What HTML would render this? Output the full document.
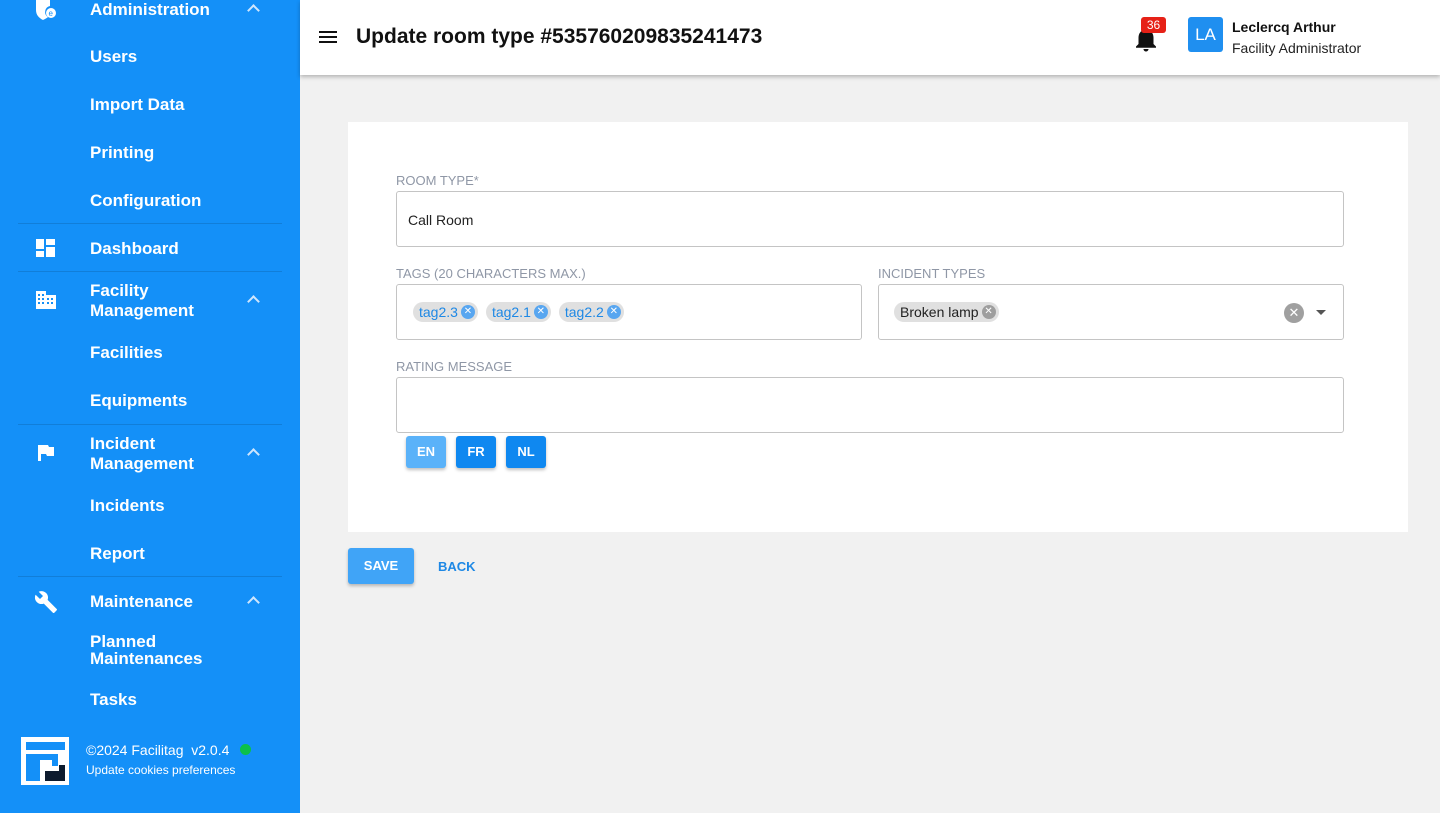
<!DOCTYPE html>
<html><head><meta charset="utf-8"><style>
*{box-sizing:border-box;margin:0;padding:0}
body{width:1440px;height:813px;overflow:hidden;background:#f1f1f1;font-family:"Liberation Sans",Arial,sans-serif;position:relative}
.side{position:absolute;left:0;top:0;width:300px;height:813px;background:#1490f8;color:#fff}
.it{position:absolute;left:90px;font-weight:bold;font-size:17px;line-height:20px}
.ic{position:absolute;left:36px}
.chev{position:absolute;left:249px;width:9px;height:9px;border-left:2px solid #cfe6fd;border-top:2px solid #cfe6fd;transform:rotate(45deg)}
.sep{position:absolute;left:18px;width:264px;height:1px;background:rgba(0,0,0,.12)}
.top{position:absolute;left:300px;top:0;width:1140px;height:75px;background:#fff;box-shadow:0 2px 4px rgba(0,0,0,.25)}
.card{position:absolute;left:348px;top:122px;width:1060px;height:410px;background:#fff}
.lbl{position:absolute;font-size:13px;color:#8f97a6;text-transform:uppercase}
.box{position:absolute;border:1px solid #c4c4c4;border-radius:3px;background:#fff}
.chip{display:inline-flex;align-items:center;height:20px;border-radius:10px;background:#e0e0e0;color:#1e88e5;font-size:14px;padding:0 3px 0 6px;margin-right:8px}
.x{display:inline-block;width:14px;height:14px;border-radius:50%;background:#58a6f0;color:#fff;font-size:10px;line-height:14px;text-align:center;margin-left:3px}
.btn{position:absolute;width:40px;height:32px;border-radius:3px;background:#0f88f0;color:#fff;font-weight:bold;font-size:13px;line-height:32px;text-align:center;box-shadow:0 2px 3px rgba(0,0,0,.25)}
</style></head><body>
<div class="side">
 <svg class="ic" style="top:0" width="20" height="20" viewBox="0 0 20 20"><path d="M0 0h14v6a6 6 0 0 0-2 11c-1 1-3 2-5 3C3 18 0 15 0 10z" fill="#fff"/><circle cx="15" cy="13" r="5" fill="#fff"/><text x="12.5" y="16" font-size="8" fill="#1490f8" font-family="Liberation Sans">e</text></svg>
 <div class="it" style="top:0px">Administration</div><div class="chev" style="top:6px"></div>
 <div class="it" style="top:47px">Users</div>
 <div class="it" style="top:95px">Import Data</div>
 <div class="it" style="top:143px">Printing</div>
 <div class="it" style="top:191px">Configuration</div>
 <div class="sep" style="top:223px"></div>
 <svg class="ic" style="top:239px" width="19" height="18" viewBox="0 0 19 18" fill="#fff"><rect x="0" y="0" width="8" height="10"/><rect x="0" y="12" width="8" height="6"/><rect x="10" y="0" width="9" height="6"/><rect x="10" y="8" width="9" height="10"/></svg>
 <div class="it" style="top:239px">Dashboard</div>
 <div class="sep" style="top:271px"></div>
 <svg class="ic" style="top:291px" width="20" height="18" viewBox="0 0 20 18" fill="#fff"><path d="M0 0h10v4h10v14H0z"/><g fill="#1490f8"><rect x="2" y="3" width="2" height="2"/><rect x="6" y="3" width="2" height="2"/><rect x="2" y="7" width="2" height="2"/><rect x="6" y="7" width="2" height="2"/><rect x="2" y="11" width="2" height="2"/><rect x="6" y="11" width="2" height="2"/><rect x="11" y="7" width="2" height="2"/><rect x="15" y="7" width="2" height="2"/><rect x="11" y="11" width="2" height="2"/><rect x="15" y="11" width="2" height="2"/></g></svg>
 <div class="it" style="top:281px">Facility<br>Management</div><div class="chev" style="top:297px"></div>
 <div class="it" style="top:343px">Facilities</div>
 <div class="it" style="top:391px">Equipments</div>
 <div class="sep" style="top:424px"></div>
 <svg class="ic" style="top:445px;left:38px" width="16" height="16" viewBox="0 0 16 16" fill="#fff"><path d="M0 0h10l1 2h5v9H9l-1-2H3v7H0z"/></svg>
 <div class="it" style="top:434px">Incident<br>Management</div><div class="chev" style="top:450px"></div>
 <div class="it" style="top:496px">Incidents</div>
 <div class="it" style="top:544px">Report</div>
 <div class="sep" style="top:576px"></div>
 <svg class="ic" style="top:590px;left:34px" width="24" height="24" viewBox="0 0 24 24" fill="#fff"><path d="M22.7 19l-9.1-9.1c.9-2.3.4-5-1.5-6.9-2-2-5-2.4-7.4-1.3L9 6 6 9 1.6 4.7C.4 7.1.9 10.1 2.9 12.1c1.9 1.9 4.6 2.4 6.9 1.5l9.1 9.1c.4.4 1 .4 1.4 0l2.3-2.3c.5-.4.5-1.1.1-1.4z"/></svg>
 <div class="it" style="top:592px">Maintenance</div><div class="chev" style="top:598px"></div>
 <div class="it" style="top:633px;line-height:17px">Planned<br>Maintenances</div>
 <div class="it" style="top:690px">Tasks</div>
 <svg style="position:absolute;left:21px;top:737px" width="48" height="48" viewBox="0 0 48 48"><rect width="48" height="48" fill="#fff"/><rect x="5" y="5" width="39" height="8" fill="#1490f8"/><rect x="5" y="17" width="30" height="6" fill="#1490f8"/><rect x="5" y="17" width="14" height="27" fill="#1490f8"/><rect x="31" y="17" width="6" height="12" fill="#1490f8"/><path d="M24 44h20V28h-6v6H24z" fill="#0d1b2e"/></svg>
 <div style="position:absolute;left:86px;top:742px;font-size:14px">©2024 Facilitag&nbsp; v2.0.4</div>
 <div style="position:absolute;left:240px;top:744px;width:11px;height:11px;border-radius:50%;background:#0cc04a"></div>
 <div style="position:absolute;left:86px;top:763px;font-size:12px">Update cookies preferences</div>
</div>
<div class="top">
 <div style="position:absolute;left:19px;top:31px;width:18px;height:2px;background:#111;box-shadow:0 5px 0 #111,0 10px 0 #111"></div>
 <div style="position:absolute;left:56px;top:25px;font-size:21px;font-weight:bold;color:#111">Update room type #535760209835241473</div>
 <svg style="position:absolute;left:831px;top:24px" width="30" height="30" viewBox="0 0 24 24"><path d="M12 22c1.1 0 2-.9 2-2h-4c0 1.1.9 2 2 2zm6-6v-5c0-3.1-1.6-5.6-4.5-6.3V4c0-.8-.7-1.5-1.5-1.5s-1.5.7-1.5 1.5v.7C7.6 5.4 6 7.9 6 11v5l-2 2v1h16v-1z" fill="#111"/></svg>
 <div style="position:absolute;left:841px;top:17px;width:25px;height:16px;border-radius:3px;background:#e62117;color:#fff;font-size:12px;text-align:center;line-height:16px">36</div>
 <div style="position:absolute;left:888px;top:17px;width:35px;height:35px;border-radius:3px;background:#1f8ff0;color:#fff;font-size:17px;text-align:center;line-height:35px">LA</div>
 <div style="position:absolute;left:932px;top:19px;font-size:14px;font-weight:bold;color:#111">Leclercq Arthur</div>
 <div style="position:absolute;left:932px;top:40px;font-size:14px;color:#222">Facility Administrator</div>
</div>
<div class="card">
 <div class="lbl" style="left:48px;top:51px">Room type*</div>
 <div class="box" style="left:48px;top:69px;width:948px;height:56px"><span style="position:absolute;left:11px;top:20px;font-size:14px;color:#222">Call Room</span></div>
 <div class="lbl" style="left:48px;top:144px">Tags (20 characters max.)</div>
 <div class="box" style="left:48px;top:162px;width:466px;height:56px;padding:17px 0 0 16px"><span class="chip">tag2.3<span class="x">✕</span></span><span class="chip">tag2.1<span class="x">✕</span></span><span class="chip">tag2.2<span class="x">✕</span></span></div>
 <div class="lbl" style="left:530px;top:144px">Incident types</div>
 <div class="box" style="left:530px;top:162px;width:466px;height:56px;padding:17px 0 0 16px"><span class="chip" style="color:#222;margin-left:-1px">Broken lamp<span class="x" style="background:#9e9e9e">✕</span></span>
  <span style="position:absolute;left:405px;top:18px;width:20px;height:20px;border-radius:50%;background:#a0a0a0;color:#fff;font-size:13px;text-align:center;line-height:20px">✕</span>
  <span style="position:absolute;left:437px;top:25px;border-left:5px solid transparent;border-right:5px solid transparent;border-top:5px solid #555"></span></div>
 <div class="lbl" style="left:48px;top:237px">Rating message</div>
 <div class="box" style="left:48px;top:255px;width:948px;height:56px"></div>
 <div class="btn" style="left:58px;top:314px;background:#5ab2f9">EN</div>
 <div class="btn" style="left:108px;top:314px">FR</div>
 <div class="btn" style="left:158px;top:314px">NL</div>
</div>
<div style="position:absolute;left:348px;top:548px;width:66px;height:36px;border-radius:3px;background:#40a4f7;color:#fff;font-weight:bold;font-size:13px;text-align:center;line-height:36px;box-shadow:0 2px 3px rgba(0,0,0,.25)">SAVE</div>
<div style="position:absolute;left:438px;top:559px;color:#1e88e5;font-weight:bold;font-size:13px">BACK</div>
</body></html>
